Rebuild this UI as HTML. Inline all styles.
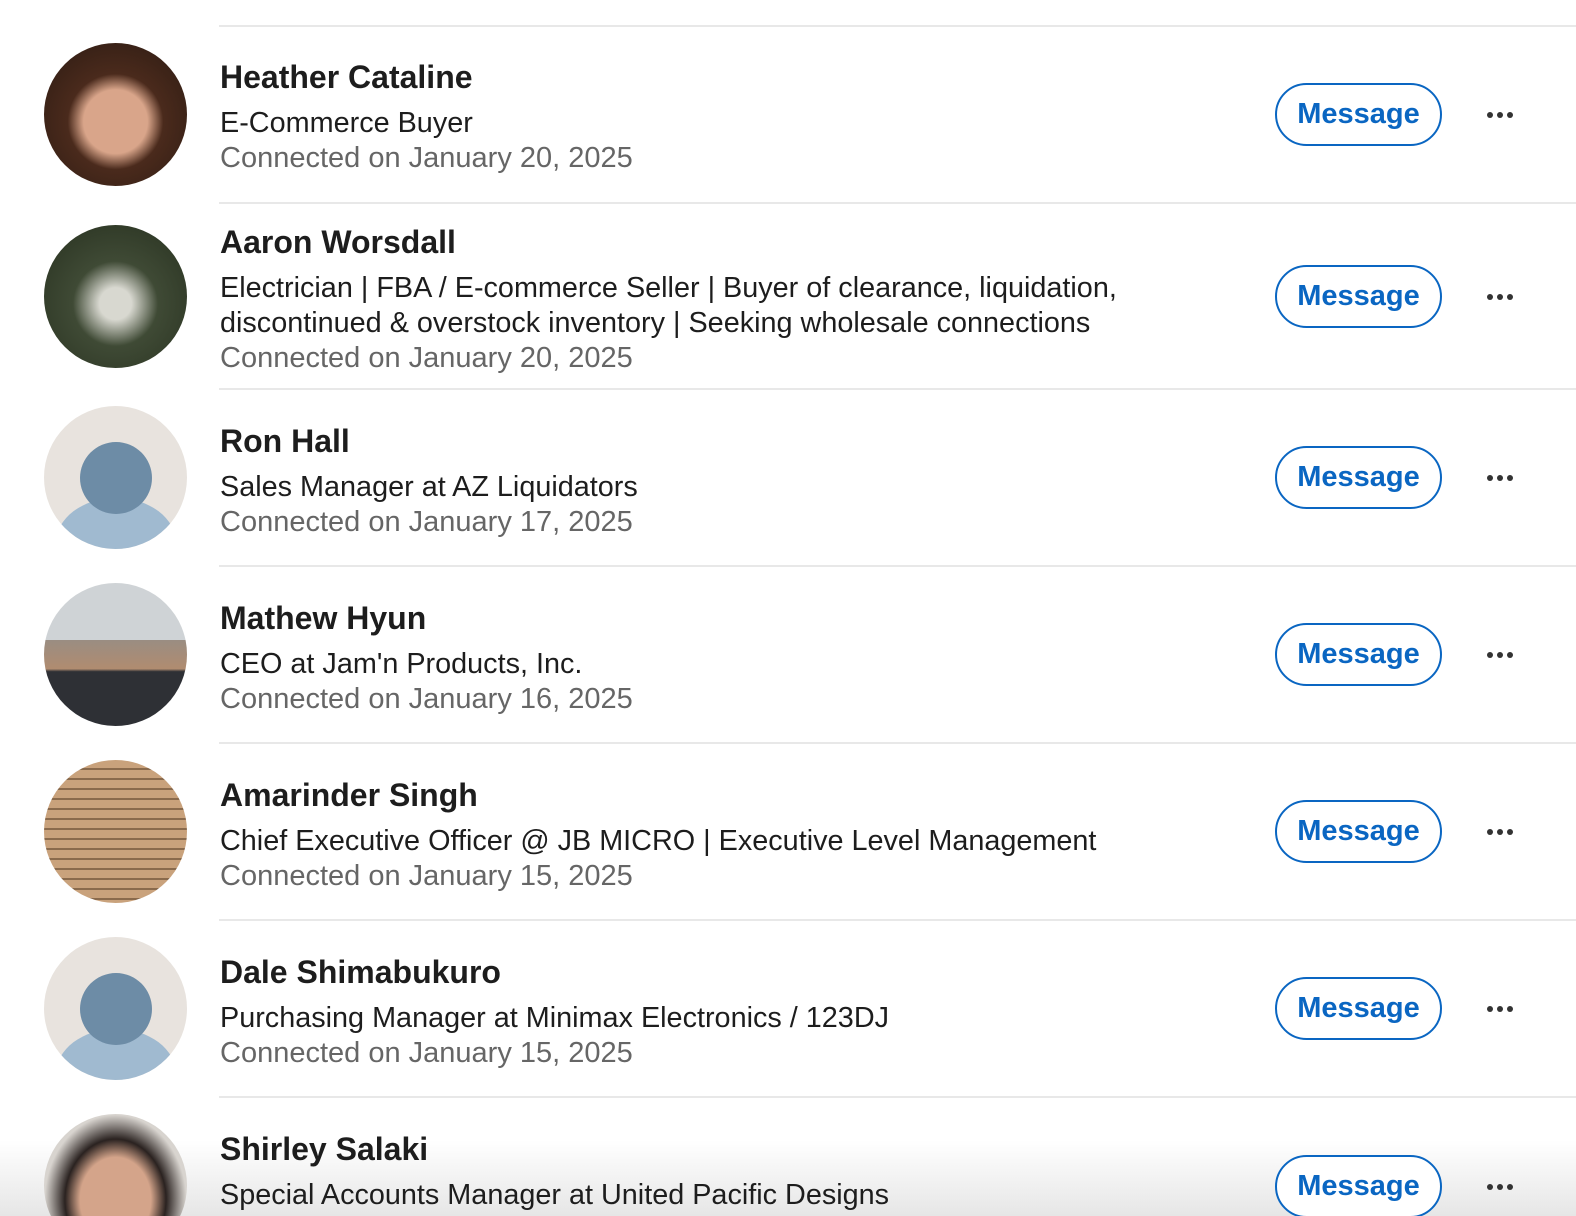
<!DOCTYPE html><html style="overflow:hidden"><head><style>
html,body{overflow:hidden;height:1216px}
body{margin:0;width:1576px;background:#fff;position:relative;font-family:"Liberation Sans",Arial,sans-serif}
.sep{position:absolute;left:219px;right:0;height:2px;background:#e8e8e8}
.av{position:absolute;left:44px;width:143px;height:143px;border-radius:50%;overflow:hidden;z-index:1}
.t{position:absolute;left:220px;line-height:35px;white-space:nowrap;z-index:1}
.n{font-size:32px;font-weight:bold;color:#1d1d1d}
.h{font-size:28.8px;color:#1d1d1d}
.d{font-size:29px;color:#666}
.btn{position:absolute;left:1275px;width:163px;height:59px;border:2px solid #0a66c2;border-radius:32px;color:#0a66c2;font-size:29px;font-weight:bold;text-align:center;line-height:59px;z-index:1}
.dots{position:absolute;left:1487px;width:30px;height:8px;z-index:1}
.dots i{float:left;width:6px;height:6px;border-radius:50%;background:#333;margin-right:4px}
.ph{background:#e8e3de}
.ph:before{content:"";position:absolute;left:36px;top:36px;width:72px;height:72px;border-radius:50%;background:#6d8ca6;z-index:1}
.ph:after{content:"";position:absolute;left:12px;top:92px;width:120px;height:90px;border-radius:50%;background:#a0bad0}
.fade{position:absolute;left:0;right:0;top:1140px;height:76px;background:linear-gradient(#fff,#e6e6e6);z-index:0}
</style></head><body>
<div class="fade"></div>
<div class="sep" style="top:25px"></div><div class="sep" style="top:202px"></div><div class="sep" style="top:388px"></div><div class="sep" style="top:565px"></div><div class="sep" style="top:742px"></div><div class="sep" style="top:919px"></div><div class="sep" style="top:1096px"></div>

<div class="av" style="top:43px;background:radial-gradient(circle at 50% 55%,#d9a58a 0 30%,#4a2a1c 45%,#2a1a12)"></div>
<div class="t n" style="top:60px">Heather Cataline</div>
<div class="t h" style="top:106px">E-Commerce Buyer</div>
<div class="t d" style="top:141px">Connected on January 20, 2025</div>
<div class="btn" style="top:83px">Message</div><div class="dots" style="top:112px"><i></i><i></i><i></i></div>

<div class="av" style="top:225px;background:radial-gradient(circle at 50% 55%,#d8d8d0 0 15%,#3f4a35 40%,#27301f)"></div>
<div class="t n" style="top:225px">Aaron Worsdall</div>
<div class="t h" style="top:271px">Electrician | FBA / E-commerce Seller | Buyer of clearance, liquidation,</div>
<div class="t h" style="top:306px">discontinued &amp; overstock inventory | Seeking wholesale connections</div>
<div class="t d" style="top:341px">Connected on January 20, 2025</div>
<div class="btn" style="top:265px">Message</div><div class="dots" style="top:294px"><i></i><i></i><i></i></div>

<div class="av ph" style="top:406px"></div>
<div class="t n" style="top:424px">Ron Hall</div>
<div class="t h" style="top:470px">Sales Manager at AZ Liquidators</div>
<div class="t d" style="top:505px">Connected on January 17, 2025</div>
<div class="btn" style="top:446px">Message</div><div class="dots" style="top:475px"><i></i><i></i><i></i></div>

<div class="av" style="top:583px;background:linear-gradient(#cfd3d6 0 40%,#9a8d82 40%,#b08c70 60%,#2e3035 62%)"></div>
<div class="t n" style="top:601px">Mathew Hyun</div>
<div class="t h" style="top:647px">CEO at Jam'n Products, Inc.</div>
<div class="t d" style="top:682px">Connected on January 16, 2025</div>
<div class="btn" style="top:623px">Message</div><div class="dots" style="top:652px"><i></i><i></i><i></i></div>

<div class="av" style="top:760px;background:repeating-linear-gradient(#c9a27c 0 8px,#8a6a4c 8px 10px)"></div>
<div class="t n" style="top:778px">Amarinder Singh</div>
<div class="t h" style="top:824px">Chief Executive Officer @ JB MICRO | Executive Level Management</div>
<div class="t d" style="top:859px">Connected on January 15, 2025</div>
<div class="btn" style="top:800px">Message</div><div class="dots" style="top:829px"><i></i><i></i><i></i></div>

<div class="av ph" style="top:937px"></div>
<div class="t n" style="top:955px">Dale Shimabukuro</div>
<div class="t h" style="top:1001px">Purchasing Manager at Minimax Electronics / 123DJ</div>
<div class="t d" style="top:1036px">Connected on January 15, 2025</div>
<div class="btn" style="top:977px">Message</div><div class="dots" style="top:1006px"><i></i><i></i><i></i></div>

<div class="av" style="top:1114px;background:radial-gradient(ellipse at 50% 60%,#d4a48a 0 35%,#2a2220 50%,#d8d4cf 70%)"></div>
<div class="t n" style="top:1132px">Shirley Salaki</div>
<div class="t h" style="top:1178px">Special Accounts Manager at United Pacific Designs</div>
<div class="btn" style="top:1155px;background:#fff">Message</div><div class="dots" style="top:1184px"><i></i><i></i><i></i></div>
</body></html>
